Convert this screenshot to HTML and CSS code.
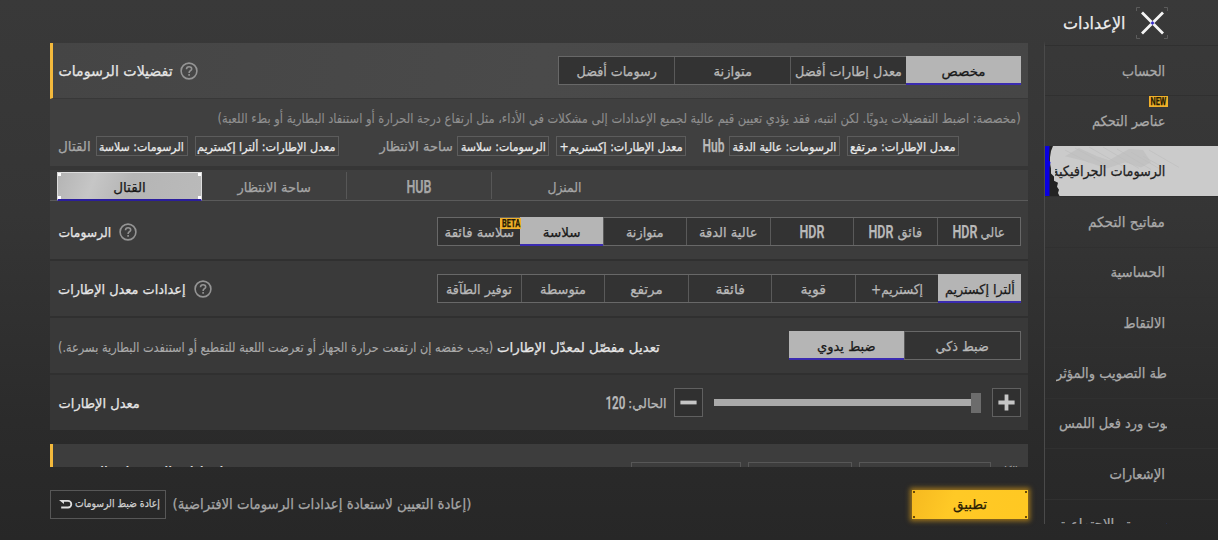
FILE: index.html
```html
<!DOCTYPE html>
<html lang="ar">
<head>
<meta charset="utf-8">
<title>الإعدادات</title>
<link rel="stylesheet" href="styles.css">
</head>
<body>
<div class="app">
  <main class="main">
    <div class="list">
      <section class="row head">
        <span class="t title" data-w="114">تفضيلات الرسومات</span>
        <svg class="help" viewBox="0 0 18 18"><circle cx="9" cy="9" r="7.9"/><path d="M6.5 7.2c0-3.4 5.2-3.2 5.2-.3 0 1.9-2.6 1.8-2.6 4M9.1 12.1v1.6"/></svg>
        <div class="seg four">
          <div class="cell"><span class="t" data-w="80">رسومات أفضل</span></div>
          <div class="cell"><span class="t" data-w="39">متوازنة</span></div>
          <div class="cell"><span class="t" data-w="107">معدل إطارات أفضل</span></div>
          <div class="cell on"><span class="t" data-w="44">مخصص</span></div>
        </div>
      </section>
      <section class="info">
        <p class="desc"><span class="t" data-w="803">(مخصصة: اضبط التفضيلات يدويًا. لكن انتبه، فقد يؤدي تعيين قيم عالية لجميع الإعدادات إلى مشكلات في الأداء، مثل ارتفاع درجة الحرارة أو استنفاد البطارية أو بطء اللعبة)</span></p>
        <div class="chips">
          <div class="group g1"><span class="t lab" data-w="33">القتال</span>
            <span class="chip c1"><span class="t" data-w="85">الرسومات: سلاسة</span></span>
            <span class="chip c2"><span class="t" data-w="138">معدل الإطارات: ألترا إكستريم</span></span></div>
          <div class="group g2"><span class="t lab" data-w="73">ساحة الانتظار</span>
            <span class="chip c3"><span class="t" data-w="85">الرسومات: سلاسة</span></span>
            <span class="chip c4"><span class="t" data-w="123">معدل الإطارات: إكستريم+</span></span></div>
          <div class="group"><span class="t cond lab" data-w="22">Hub</span>
            <span class="chip c5"><span class="t" data-w="104">الرسومات: عالية الدقة</span></span>
            <span class="chip c6"><span class="t" data-w="106">معدل الإطارات: مرتفع</span></span></div>
        </div>
      </section>
      <nav class="tabs">
        <div class="tab on"><i></i><i></i><i></i><i></i><span class="t" data-w="33">القتال</span></div>
        <div class="tab"><span class="t" data-w="73">ساحة الانتظار</span></div>
        <div class="tab"><span class="t cond" data-w="25">HUB</span></div>
        <div class="tab"><span class="t" data-w="34">المنزل</span></div>
      </nav>
      <section class="row r1">
        <span class="t" data-w="53">الرسومات</span>
        <svg class="help" viewBox="0 0 18 18"><circle cx="9" cy="9" r="7.9"/><path d="M6.5 7.2c0-3.4 5.2-3.2 5.2-.3 0 1.9-2.6 1.8-2.6 4M9.1 12.1v1.6"/></svg>
        <div class="seg seven">
          <div class="cell"><span class="t" data-w="70">سلاسة فائقة</span><b class="badge beta"><span class="t cond" data-w="18">BETA</span></b></div>
          <div class="cell on"><span class="t" data-w="38">سلاسة</span></div>
          <div class="cell"><span class="t" data-w="38">متوازنة</span></div>
          <div class="cell"><span class="t" data-w="59">عالية الدقة</span></div>
          <div class="cell"><span class="t cond" data-w="25">HDR</span></div>
          <div class="cell"><span class="t cond" data-w="25">HDR</span><span class="t" data-w="25">فائق</span></div>
          <div class="cell"><span class="t cond" data-w="25">HDR</span><span class="t" data-w="25">عالي</span></div>
        </div>
      </section>
      <section class="row r2">
        <span class="t" data-w="128">إعدادات معدل الإطارات</span>
        <svg class="help" viewBox="0 0 18 18"><circle cx="9" cy="9" r="7.9"/><path d="M6.5 7.2c0-3.4 5.2-3.2 5.2-.3 0 1.9-2.6 1.8-2.6 4M9.1 12.1v1.6"/></svg>
        <div class="seg seven">
          <div class="cell"><span class="t" data-w="66">توفير الطآقة</span></div>
          <div class="cell"><span class="t" data-w="46">متوسطة</span></div>
          <div class="cell"><span class="t" data-w="32">مرتفع</span></div>
          <div class="cell"><span class="t" data-w="29">فائقة</span></div>
          <div class="cell"><span class="t" data-w="25">قوية</span></div>
          <div class="cell"><span class="t" data-w="52">إكستريم+</span></div>
          <div class="cell on"><span class="t" data-w="70">ألترا إكستريم</span></div>
        </div>
      </section>
      <section class="row r3">
        <span class="t note" data-w="435">(يجب خفضه إن ارتفعت حرارة الجهاز أو تعرضت اللعبة للتقطيع أو استنفدت البطارية بسرعة.)</span>
        <span class="t" data-w="163">تعديل مفصّل لمعدّل الإطارات</span>
        <div class="seg two">
          <div class="cell on"><span class="t" data-w="59">ضبط يدوي</span></div>
          <div class="cell"><span class="t" data-w="53">ضبط ذكي</span></div>
        </div>
      </section>
      <section class="row r4">
        <span class="t" data-w="81">معدل الإطارات</span>
        <div class="slider">
          <span class="t cond val" data-w="20">120</span><span class="t val" data-w="39">الحالي:</span>
          <span class="btn"><svg viewBox="0 0 30 30"><path d="M6 15h18"/></svg></span>
          <span class="track"></span><span class="thumb"></span>
          <span class="btn plus"><svg viewBox="0 0 30 30"><path d="M6 15h18M15 6v18"/></svg></span>
        </div>
      </section>
      <section class="row head next">
        <span class="t title" data-w="165">إعدادات الرسومات المتقدمة</span>
        <div class="boxes"><span class="b1"></span><span class="b2"></span><span class="b3"></span><span class="t lab" data-w="18">الكل</span></div>
      </section>
    </div>
    <footer class="foot">
      <div class="reset">
        <svg viewBox="0 0 14 12"><path class="line" d="M3 2.900h6a3.300 3.300 0 0 1 0 6.600H2.200"/><path class="tip" d="M0 2h5v4z"/></svg>
        <span class="t" data-w="85">إعادة ضبط الرسومات</span>
      </div>
      <span class="t hint" data-w="299">(إعادة التعيين لاستعادة إعدادات الرسومات الافتراضية)</span>
      <div class="apply"><i></i><i></i><i></i><i></i><span class="t" data-w="34">تطبيق</span></div>
    </footer>
  </main>
  <aside class="side">
    <header class="top">
      <span class="t" data-w="63">الإعدادات</span>
      <svg class="close" viewBox="0 0 32 32"><path class="frame" d="M.5 4V.5H4M28 .5h3.500V4M31.500 28v3.500H28M4 31.500H.5V28"/><path class="x" d="M6 5.500 27 26.500M27 5.500 6 26.500"/><path class="dot" d="M16.500 14l2 2-2 2-2-2z"/></svg>
    </header>
    <nav class="menu">
      <div class="item"><span class="t" data-w="43">الحساب</span></div>
      <div class="item"><span class="t" data-w="73">عناصر التحكم</span><b class="badge new"><span class="t cond" data-w="16">NEW</span></b></div>
      <div class="item on">
        <svg class="ink" viewBox="0 0 173 50" preserveAspectRatio="none">
          <path class="shade" d="M20 10 34 2 52 10 64 14 84 3 98 4 106 16 96 21 80 16 62 22 40 15z"/>
          <path class="hatch" d="M20 4l24 12M30 2l30 16M44 1l34 19M58 1l36 21M72 3l34 20M86 6l28 16M98 10l20 11M104 4l30 17"/>
          <path class="blot" d="M4 0h4l-2 5-1 6 0 6 1 5 0 5 3 3 0 4 4 2-1 4 2 3-1 3 2 4H4z"/>
          <path class="blue" d="M0 0h4.500l-.5 14 1.500 2-1 5 0 29H0z"/>
        </svg>
        <div class="clip"><span class="t" data-w="113">الرسومات الجرافيكية</span></div></div>
      <div class="item"><span class="t" data-w="77">مفاتيح التحكم</span></div>
      <div class="item"><span class="t" data-w="54">الحساسية</span></div>
      <div class="item"><span class="t" data-w="42">الالتقاط</span></div>
      <div class="item cut"><div class="clip"><span class="t" data-w="111">طة التصويب والمؤثر</span></div></div>
      <div class="item cut"><div class="clip pad"><span class="t" data-w="118">صوت ورد فعل اللمس</span></div></div>
      <div class="item"><span class="t" data-w="55">الإشعارات</span></div>
      <div class="item cut"><div class="clip pad"><span class="t" data-w="115">خصوصية والاجتماعية</span></div></div>
    </nav>
  </aside>
</div>
<script src="fit.js"></script>
</body>
</html>
```

FILE: styles.css
```css
* { box-sizing: border-box; }
body { margin: 0; background: #282828; color: #e6e6e6; font-family: "DejaVu Sans", sans-serif; font-size: 13.5px; }
.app { display: flex; width: 1218px; height: 540px; overflow: hidden;
  background: linear-gradient(#393939 0, #353535 40%, #2b2b2b 78%, #272727 100%); }
.t { display: inline-block; direction: rtl; white-space: nowrap; flex: none; line-height: 20px; -webkit-text-stroke: .25px currentColor; }
.cond { font-family: Roboto, sans-serif; font-weight: 600; font-size: 18px; }

.main { width: 1028px; padding: 43px 0 0 50px; flex: none; }
.list { height: 424px; overflow: hidden; }
.row { display: flex; align-items: center; height: 57px; padding: 0 7px 0 8px; border-bottom: 2px solid #303030; background: #3b3b3b; }
.head { height: 56px; background: linear-gradient(100deg, #454545, #4a4a4a 50%, #464646); border-left: 3px solid #f3b93c; padding-left: 5px; border-bottom: 1px solid #383838; }
.head > .title { font-size: 14.5px; }
.help { width: 18px; height: 18px; margin-left: 8px; fill: none; stroke: #949494; stroke-width: 1.6; }

.seg { display: flex; height: 29px; margin-left: auto; border: 1px solid #686868; background: #333; color: #b9b9b9; }
.cell { flex: 1 1 0; min-width: 0; display: flex; align-items: center; justify-content: center; gap: 4px; position: relative; border-left: 1px solid #5a5a5a; }
.cell:first-child { border-left: 0; }
.cell.on { color: #191919; background: #b5b5b5; box-shadow: inset 0 -1px #3a2bb0, 0 1px #3a2bb0, 0 -1px #b5b5b5; border: 0; z-index: 1; }
.cell.on:first-child { margin-left: -1px; }
.cell.on:last-child { margin-right: -1px; }
.four { width: 463px; }
.seven { width: 584px; }
.two { width: 232px; }

.badge { position: absolute; z-index: 2; display: flex; align-items: center; justify-content: center; height: 11px; background: #f0b02a; color: #251b05; }
.badge .cond { font-size: 11.5px; line-height: 11px; font-weight: 700; }
.beta { width: 21px; right: -1px; top: 0; }
.new { width: 19px; right: 50px; top: 0; }

.info { height: 67px; background: #404040; padding-top: 9px; }
.desc { display: flex; justify-content: flex-end; margin: 0; padding-right: 7px; color: #8f8f8f; }
.desc .t { -webkit-text-stroke-width: .1px; }
.chips { display: flex; padding: 8px 0 0 8px; }
.group { display: flex; align-items: center; }
.group .lab { margin-right: 5px; }
.lab { color: #a6a6a6; }
.g1 { width: 321px; }
.g2 { width: 323px; }
.group .cond { color: #b9b9b9; }
.chip { display: flex; align-items: center; justify-content: center; height: 20px; margin-right: 7px; border: 1px solid #5c5c5c; font-size: 12px; color: #eaeaea; }
.chip .t { line-height: 18px; margin-top: 1px; }
.c1, .c3 { width: 92px; }
.c2 { width: 144px; }
.c4 { width: 130px; }
.c5 { width: 111px; }
.c6 { width: 112px; }

.tabs { display: flex; height: 38px; padding: 5px 0 1px 7px; border-top: 4px solid #363636; background: linear-gradient(#3f3f3f 0 30px, #5a5a5a 30px 31px, #3c3c3c 31px); color: #a6a6a6; }
.tab { position: relative; width: 145px; height: 27px; margin-top: -3px; padding-top: 2px; display: flex; align-items: center; justify-content: center; border-right: 1px solid #575757; }
.tab:last-child { border: 0; }
.tab.on { height: 29px; background: linear-gradient(110deg, #b4b4b4, #c6c6c6 25%, #b5b5b5 50%, #bababa); border: 1px solid #ddd; border-bottom: 2px solid #2b1e9c; color: #191919; }
.tab i { position: absolute; width: 3px; height: 3px; background: #fff; }
.tab i:nth-child(1) { left: 0; top: 0; }
.tab i:nth-child(2) { right: 0; top: 0; }
.tab i:nth-child(3) { left: 0; bottom: 0; }
.tab i:nth-child(4) { right: 0; bottom: 0; }

.r1 { background: #3c3c3c; }
.r2 { background: #3a3a3a; }
.r3 { background: #393939; }
.r3 > .t { padding-top: 2px; }
.r4 { background: #363636; border: 0; height: 55px; margin-bottom: 14px; }
.note { color: #a9a9a9; margin-right: 4px; }
.row > .note { -webkit-text-stroke-width: .1px; }
.slider { display: flex; align-items: center; margin-left: auto; color: #b9b9b9; }
.slider .t { padding-top: 1px; }
.slider .cond { margin-right: 3px; }
.btn { width: 29px; height: 29px; border: 1px solid #606060; background: #303030; margin: 0 11px 0 7px; }
.btn svg { display: block; width: 27px; height: 27px; fill: none; stroke: #c6c6c6; stroke-width: 4.200; }
.btn.plus { margin: 0 0 0 11px; }
.track { width: 257px; height: 7px; background: #aaa; }
.thumb { width: 10px; height: 20px; background: #6c6c6c; }

.next { background: #3d3d3d; align-items: flex-start; padding-top: 18px; border-bottom: 0; }
.boxes { display: flex; margin-left: auto; gap: 7px; padding-right: 3px; }
.boxes span:not(.t) { height: 30px; border: 1px solid #575757; }
.boxes .lab { margin-left: 2px; margin-top: -1px; }
.b1 { width: 110px; }
.b2 { width: 104px; }
.b3 { width: 132px; }

.foot { display: flex; align-items: center; height: 28px; margin-top: 23px; }
.reset { display: flex; align-items: center; justify-content: space-between; width: 116px; height: 29px; padding: 0 5px 0 8px; border: 1px solid #575757; font-size: 11px; color: #d2d2d2; }
.reset svg { width: 14px; height: 12px; }
.reset .line { fill: none; stroke: #dedede; stroke-width: 1.800; }
.reset .tip { fill: #dedede; }
.hint { color: #a6a6a6; margin-left: 6px; font-size: 14.5px; }
.apply { position: relative; width: 116px; height: 29px; margin-left: auto; display: flex; align-items: center; justify-content: center; background: linear-gradient(110deg, #f6b920, #ffc926 35%, #ffc822); color: #2b1e04; box-shadow: 0 0 5px 2px rgba(240, 170, 20, .6); }
.apply i { position: absolute; width: 2px; height: 2px; background: #6a4a08; }
.apply i:nth-child(1) { left: 1px; top: 1px; }
.apply i:nth-child(2) { right: 1px; top: 1px; }
.apply i:nth-child(3) { left: 1px; bottom: 1px; }
.apply i:nth-child(4) { right: 1px; bottom: 1px; }

.side { width: 174px; margin-left: 16px; height: 524px; overflow: hidden; border-left: 1px solid transparent;
  border-image: linear-gradient(transparent 8%, #4a4a4a 9%) 1; }
.top { display: flex; align-items: center; height: 45px; padding-left: 18px; font-size: 16.5px; color: #ededed; }
.top .t { padding-top: 2px; }
.close { width: 32px; height: 32px; margin-left: 10px; fill: none; }
.frame { stroke: #5c5c5c; }
.x { stroke: #f4f4f4; stroke-width: 2.800; }
.dot { fill: #3a30c8; }
.item { position: relative; height: 50.400px; display: flex; align-items: center; justify-content: flex-end; padding-right: 53px; border-top: 1px solid #303030; color: #aaa; font-size: 14px; }
.item.on { background: #cbcbcb; border-color: #cbcbcb; color: #202020; }
.ink { position: absolute; left: 0; top: -1px; width: 173px; height: 51px; }
.shade { fill: #c2c2c2; }
.hatch { stroke: #bcbcbc; stroke-width: .6; }
.blot { fill: #232323; }
.blue { fill: #0a00e0; }
.clip { position: relative; display: flex; justify-content: flex-end; width: 110px; overflow: hidden; }
.cut { padding-right: 51px; }
.cut .clip { width: 111px; justify-content: flex-start; }
.cut .pad { width: 108px; }
```

FILE: fit.js
```js
// Scales each label horizontally so that it fills the width reserved for it.
document.querySelectorAll('.t[data-w]').forEach(function (el) {
  var want = parseFloat(el.dataset.w);
  var natural = el.offsetWidth;
  el.style.transform = 'scaleX(' + want / natural + ')';
  var side = (want - natural) / 2;
  var cs = getComputedStyle(el);
  el.style.marginLeft = parseFloat(cs.marginLeft) + side + 'px';
  el.style.marginRight = parseFloat(cs.marginRight) + side + 'px';
});
```
